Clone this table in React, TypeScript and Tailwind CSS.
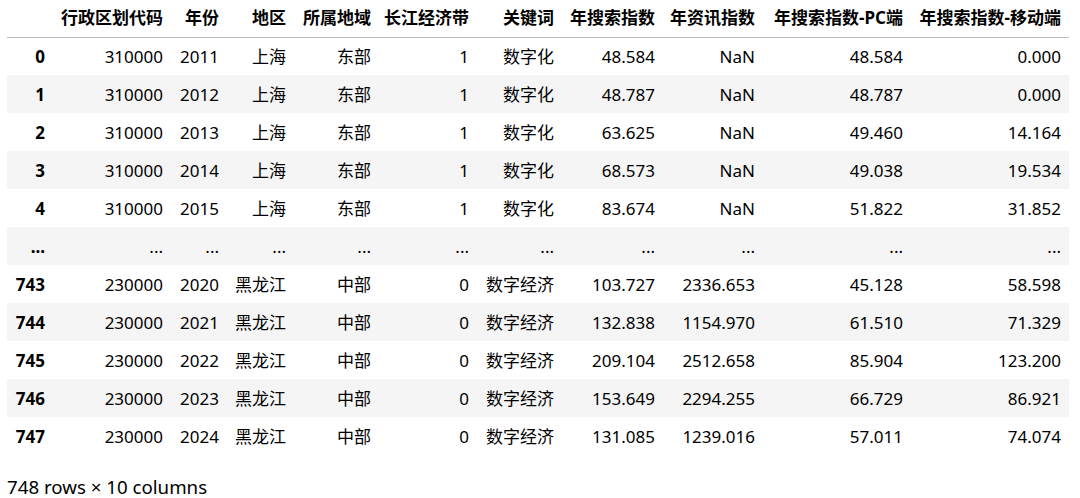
const columns = ['行政区划代码', '年份', '地区', '所属地域', '长江经济带', '关键词', '年搜索指数', '年资讯指数', '年搜索指数-PC端', '年搜索指数-移动端']

const rows: [string, string[]][] = [
  ['0', ['310000', '2011', '上海', '东部', '1', '数字化', '48.584', 'NaN', '48.584', '0.000']],
  ['1', ['310000', '2012', '上海', '东部', '1', '数字化', '48.787', 'NaN', '48.787', '0.000']],
  ['2', ['310000', '2013', '上海', '东部', '1', '数字化', '63.625', 'NaN', '49.460', '14.164']],
  ['3', ['310000', '2014', '上海', '东部', '1', '数字化', '68.573', 'NaN', '49.038', '19.534']],
  ['4', ['310000', '2015', '上海', '东部', '1', '数字化', '83.674', 'NaN', '51.822', '31.852']],
  ['...', ['...', '...', '...', '...', '...', '...', '...', '...', '...', '...']],
  ['743', ['230000', '2020', '黑龙江', '中部', '0', '数字经济', '103.727', '2336.653', '45.128', '58.598']],
  ['744', ['230000', '2021', '黑龙江', '中部', '0', '数字经济', '132.838', '1154.970', '61.510', '71.329']],
  ['745', ['230000', '2022', '黑龙江', '中部', '0', '数字经济', '209.104', '2512.658', '85.904', '123.200']],
  ['746', ['230000', '2023', '黑龙江', '中部', '0', '数字经济', '153.649', '2294.255', '66.729', '86.921']],
  ['747', ['230000', '2024', '黑龙江', '中部', '0', '数字经济', '131.085', '1239.016', '57.011', '74.074']],
]

export default function App() {
  return (
    <div
      className="w-[1080px] h-[498px] bg-white text-black px-[7px] text-[17px] overflow-hidden"
      style={{ fontFamily: '"Noto Sans", "Noto Sans CJK SC", sans-serif' }}
    >
      <table className="table-fixed border-collapse w-[1062px]">
        <colgroup>
          <col className="w-[46px]" />
          <col className="w-[118px]" />
          <col className="w-[56px]" />
          <col className="w-[67px]" />
          <col className="w-[85px]" />
          <col className="w-[98px]" />
          <col className="w-[85px]" />
          <col className="w-[101px]" />
          <col className="w-[100px]" />
          <col className="w-[148px]" />
          <col className="w-[158px]" />
        </colgroup>
        <thead>
          <tr className="h-[37px] border-b border-[#bdbdbd]">
            <th />
            {columns.map(c => (
              <th key={c} className="text-right pr-2 font-bold whitespace-nowrap leading-6">{c}</th>
            ))}
          </tr>
        </thead>
        <tbody>
          {rows.map(([idx, cells], i) => (
            <tr key={idx} className={`h-[38px] ${i % 2 === 1 ? 'bg-[#f5f5f5]' : 'bg-white'}`}>
              <th className="text-right pr-2 pt-[2px] font-bold leading-6">{idx}</th>
              {cells.map((v, j) => (
                <td key={j} className="text-right pr-2 pt-[2px] whitespace-nowrap leading-6">{v}</td>
              ))}
            </tr>
          ))}
        </tbody>
      </table>
      <div className="mt-[20px] text-[18.7px] leading-6">748 rows × 10 columns</div>
    </div>
  )
}
